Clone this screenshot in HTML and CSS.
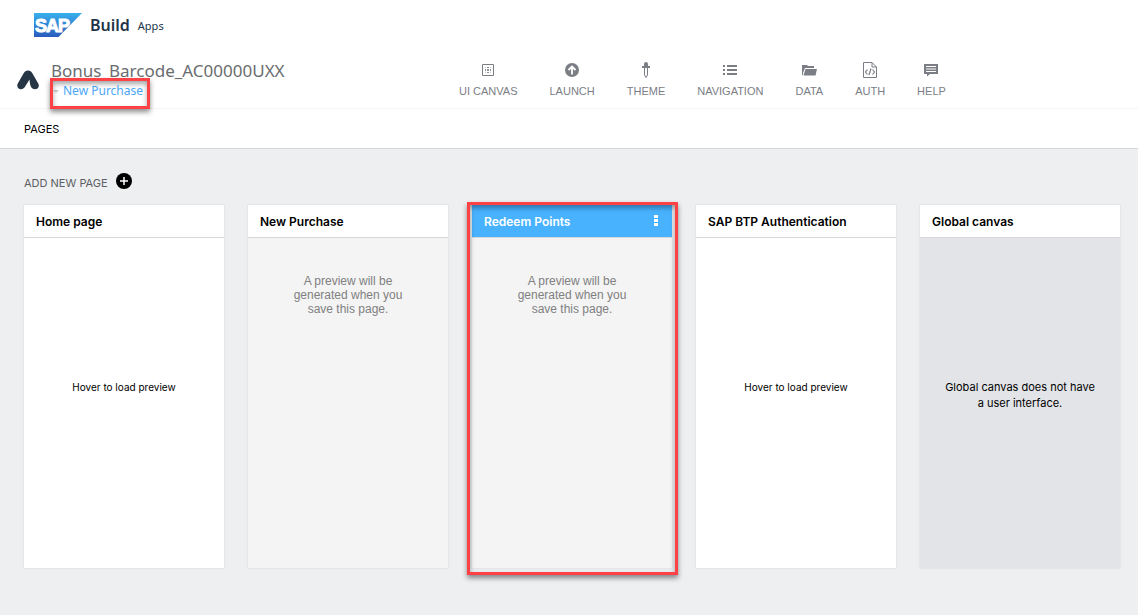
FILE: index.html
```html
<!DOCTYPE html>
<html lang="en">
<head>
<meta charset="utf-8">
<meta name="viewport" content="width=device-width, initial-scale=1">
<title>SAP Build Apps</title>
<link rel="stylesheet" href="styles.css">
</head>
<body>
<header class="brand">
  <svg class="sap-logo" viewBox="0 0 48 24" role="img" aria-label="SAP">
    <defs><linearGradient id="sky" x1="0" y1="0" x2="0" y2="1"><stop offset="0" stop-color="#38b0ec"/><stop offset="1" stop-color="#2a5bbd"/></linearGradient></defs>
    <path d="M0 0H48L24.500 24H0Z" fill="url(#sky)"/>
    <text x="1" y="19" class="sap-text">SAP</text>
  </svg>
  <span class="brand-name">Build</span>
  <span class="brand-sub">Apps</span>
</header>
<div class="project-bar">
  <svg class="app-mark" viewBox="0 0 22 20" aria-hidden="true">
    <path d="M6.500 3.500Q8 .5 11 .5T15.500 3.500L21.500 14Q22.500 17 20.500 18.500Q18 20 15.500 18.500Q13.500 17 13 14L12.500 9.500L7.500 17.500Q5.500 20 2.500 19Q-.5 17.500 .5 14Z" fill="#263645"/>
  </svg>
  <div class="project">
    <h1 class="project-name">Bonus_Barcode_AC00000UXX</h1>
    <a class="page-link" href="#page"><span class="caret"></span>New Purchase<span class="mark mark-link"></span></a>
  </div>
  <nav class="tools">
    <a class="tool" href="#canvas"><svg class="icon" viewBox="0 0 16 16"><path d="M2.500 2.500h11v11h-11z" fill="none" stroke="#7b7e85"/><path d="M7 5h2v1H7zM7 7h2v2H7zM7 10h2v1H7zM5 7h1v2H5zM10 7h1v2h-1z" fill="#8f9298"/><path d="M5 5h1v1H5zM10 5h1v1h-1zM5 10h1v1H5zM10 10h1v1h-1z" fill="#c4c6ca"/></svg>UI CANVAS</a>
    <a class="tool" href="#launch"><svg class="icon" viewBox="0 0 16 16"><circle cx="8" cy="8" r="7" fill="#7b7e85"/><path d="M8 12.500V5M4.500 8L8 4.500L11.500 8" fill="none" stroke="#fff" stroke-width="1.800"/></svg>LAUNCH</a>
    <a class="tool" href="#theme"><svg class="icon" viewBox="0 0 16 16"><path d="M6 2Q6 0 8 0T10 2V4H12V6H4V4H6Z" fill="#7b7e85"/><path d="M6.500 6V13L8 15.500L9.500 13V6" fill="none" stroke="#7b7e85"/></svg>THEME</a>
    <a class="tool" href="#navigation"><svg class="icon" viewBox="0 0 16 16"><path d="M1 3h2v2H1zM1 7h2v2H1zM1 11h2v2H1zM5 3h10v2H5zM5 7h10v2H5zM5 11h10v2H5z" fill="#7b7e85"/></svg>NAVIGATION</a>
    <a class="tool" href="#data"><svg class="icon" viewBox="0 0 16 16"><path d="M1 3H6L7 4H13V6H4L2 11V13H1Z" fill="#7b7e85"/><path d="M4.500 7H16L14.500 13.500H2.500Z" fill="#7b7e85"/></svg>DATA</a>
    <a class="tool" href="#auth"><svg class="icon" viewBox="0 0 16 16"><path d="M1.500 .5H10L14.500 5V15.500H1.500ZM10 .5V5H14.500" fill="none" stroke="#7b7e85"/><path d="M5.500 7.500L3.500 10L5.500 12.500M10.500 7.500L12.500 10L10.500 12.500M9 6.500L7 13" fill="none" stroke="#7b7e85" stroke-width="1.200"/></svg>AUTH</a>
    <a class="tool" href="#help"><svg class="icon" viewBox="0 0 16 16"><path d="M1 2H15V12H7L4 14.500V12H1Z" fill="#7b7e85"/><path d="M3 4.500H13M3 7H13M3 9.500H13" stroke="#fff"/></svg>HELP</a>
  </nav>
</div>
<div class="section-bar"><h2 class="section-title">PAGES</h2></div>
<main class="workspace">
  <button class="add-page" type="button">ADD NEW PAGE
    <svg class="plus" viewBox="0 0 16 16" aria-hidden="true"><circle cx="8" cy="8" r="8" fill="#000"/><path d="M8 4V12M4 8H12" stroke="#fff" stroke-width="1.500"/></svg>
  </button>
  <div class="cards">
    <article class="card">
      <h3 class="card-title">Home page</h3>
      <p class="card-body hover-note">Hover to load preview</p>
    </article>
    <article class="card">
      <h3 class="card-title">New Purchase</h3>
      <p class="card-body pending">A preview will be generated when you save this page.</p>
    </article>
    <article class="card">
      <h3 class="card-title active">Redeem Points
        <button class="more" type="button" aria-label="More options"><svg class="dots" viewBox="0 0 4 12"><path d="M0 0h4v3H0zM0 4h4v3H0zM0 8h4v3H0z" fill="#fff"/></svg></button>
      </h3>
      <p class="card-body pending">A preview will be generated when you save this page.</p>
      <span class="mark mark-card"></span>
    </article>
    <article class="card">
      <h3 class="card-title">SAP BTP Authentication</h3>
      <p class="card-body hover-note">Hover to load preview</p>
    </article>
    <article class="card">
      <h3 class="card-title">Global canvas</h3>
      <p class="card-body global">Global canvas does not have a user interface.</p>
    </article>
  </div>
</main>
</body>
</html>
```
FILE: styles.css
```css
* { box-sizing: border-box; }
body {
  margin: 0;
  min-height: 100vh;
  display: flex;
  flex-direction: column;
  background: #fff;
  color: #000;
  font-family: Inter, sans-serif;
}
h1, h2, h3, p { margin: 0; font-weight: 400; }
a { text-decoration: none; }
button { border: 0; padding: 0; background: none; font: inherit; color: inherit; }
svg { display: block; }

.brand {
  display: flex;
  align-items: center;
  gap: 8px;
  height: 50px;
  padding-left: 34px;
  color: #223548;
  font-family: "Noto Sans", sans-serif;
}
.sap-logo { width: 48px; height: 24px; }
.sap-text {
  font: 700 18px "Liberation Sans", sans-serif;
  fill: #fff;
  stroke: #fff;
  stroke-width: 1px;
  letter-spacing: -1px;
}
.brand-name { font-size: 16px; font-weight: 600; }
.brand-sub { font-size: 11px; }

.project-bar {
  display: flex;
  align-items: flex-start;
  height: 59px;
  padding: 10px 24px 0 17px;
  border-bottom: 1px solid #f5f5f5;
}
.app-mark { width: 22px; height: 20px; margin: 10px 12px 0 0; }
.project { width: 408px; font-family: "Noto Sans", sans-serif; }
.project-name { font-size: 17px; line-height: 22px; color: #6a6d70; }
.page-link {
  position: relative;
  display: flex;
  align-items: center;
  gap: 4px;
  width: fit-content;
  padding-left: 2px;
  font-size: 12px;
  line-height: 18px;
  color: #4ba8f8;
}
.caret { border: 3px solid transparent; border-top-color: #c9cbce; border-bottom: 0; }
.mark {
  position: absolute;
  border: 3px solid #fd4144;
  box-shadow: 0 3px 5px rgba(0, 0, 0, .45), inset 0 3px 5px rgba(0, 0, 0, .35);
  pointer-events: none;
}
.mark-link { inset: -4px -7px -9px -1px; }
.mark-card { inset: -3px -6px -7px -5px; }

.tools { display: flex; gap: 32px; }
.tool {
  display: flex;
  flex-direction: column;
  align-items: center;
  gap: 7px;
  padding-top: 2px;
  font: 11px/13px "Liberation Sans", sans-serif;
  color: #7b7e85;
}
.icon { width: 16px; height: 16px; }

.section-bar {
  display: flex;
  align-items: center;
  height: 40px;
  padding: 0 24px;
  border-bottom: 1px solid #d5d7da;
}
.section-title { font-size: 11px; line-height: 14px; }

.workspace {
  flex: 1;
  padding: 24px 18px 46px 24px;
  background: #eeeff1;
}
.add-page {
  display: flex;
  align-items: flex-end;
  gap: 8px;
  height: 16px;
  margin-bottom: 16px;
  font-size: 11px;
  line-height: 12px;
  color: #5c5f64;
}
.plus { width: 16px; height: 16px; }
.cards { display: grid; grid-template-columns: repeat(5, 1fr); gap: 24px; }
.card {
  position: relative;
  display: flex;
  flex-direction: column;
  min-height: 363px;
  background: #fff;
  box-shadow: 0 0 2px #cfd2d8;
}
.card-title {
  display: flex;
  align-items: center;
  justify-content: space-between;
  height: 33px;
  padding: 0 14px 0 12px;
  border-bottom: 1px solid #d5d7da;
  font-size: 12px;
  font-weight: 600;
}
.active { background: #48b2ff; color: #fff; }
.dots { width: 4px; height: 12px; }
.card-body { flex: 1; text-align: center; }
.hover-note { display: grid; place-items: center; padding-bottom: 32px; font-size: 10px; }
.pending {
  padding: 36px 44px 0;
  background: #f4f4f4;
  color: #808080;
  font: 12px/14px "Liberation Sans", sans-serif;
}
.global {
  display: grid;
  place-items: center;
  padding: 0 24px 16px;
  background: #e3e4e8;
  font-size: 11px;
  line-height: 16px;
}
```
